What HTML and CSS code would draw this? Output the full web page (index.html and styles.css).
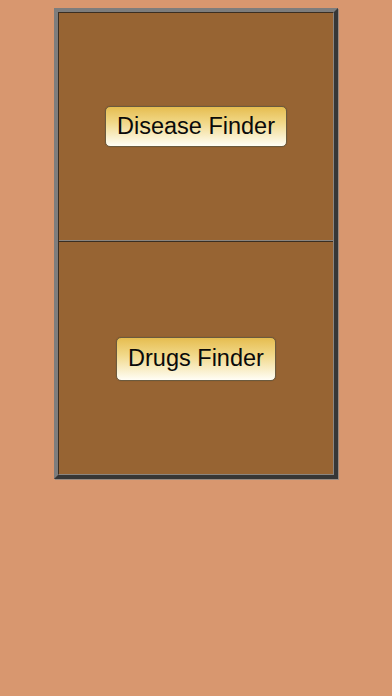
FILE: index.html
```html
<!DOCTYPE html>
<html>
<head>
<meta charset="utf-8">
<link rel="stylesheet" href="styles.css">
</head>
<body>
<div class="frame">
  <div class="panel">
    <div class="cell cell-top">
      <button class="finder finder-disease">Disease Finder</button>
    </div>
    <div class="cell cell-bottom">
      <button class="finder finder-drugs">Drugs Finder</button>
    </div>
  </div>
</div>
</body>
</html>
```

FILE: styles.css
```css
html, body {
  margin: 0;
  padding: 0;
  background: #d8976f;
  width: 392px;
  height: 696px;
  overflow: hidden;
}

.frame {
  margin: 8px 0 0 54px;
  width: 284px;
  height: 471px;
  box-sizing: border-box;
  border-style: solid;
  border-width: 4px;
  border-color: #7d7d7d #363636 #363636 #7d7d7d;
  box-shadow: 1px 1px 0 #9a8a80;
  background: #976433;
}

.panel {
  height: 100%;
  box-sizing: border-box;
  border: 1px solid;
  border-color: #3a2e22 #8a8580 #8a8580 #3a2e22;
  display: flex;
  flex-direction: column;
}

.cell {
  display: flex;
  align-items: center;
  justify-content: center;
  background: #976433;
}

.cell-top {
  height: 228px;
  box-sizing: border-box;
  border-bottom: 1px solid #8a8580;
}

.cell-bottom {
  flex: 1;
  border-top: 1px solid #3a2e22;
}

.finder {
  font-family: "Liberation Sans", Arial, sans-serif;
  font-size: 23.5px;
  color: #0a0a0a;
  padding: 0 11px;
  margin: 0;
  border: 1px solid #6b5a3e;
  border-radius: 5px;
  background: linear-gradient(to bottom, #e6bd50 0%, #f1d888 40%, #fffef6 100%);
  box-shadow: 0 0 1px rgba(0,0,0,0.3);
  cursor: pointer;
}

.finder-disease {
  height: 41px;
  margin-top: -1px;
}

.finder-drugs {
  height: 44px;
  margin-top: 1px;
}
```
